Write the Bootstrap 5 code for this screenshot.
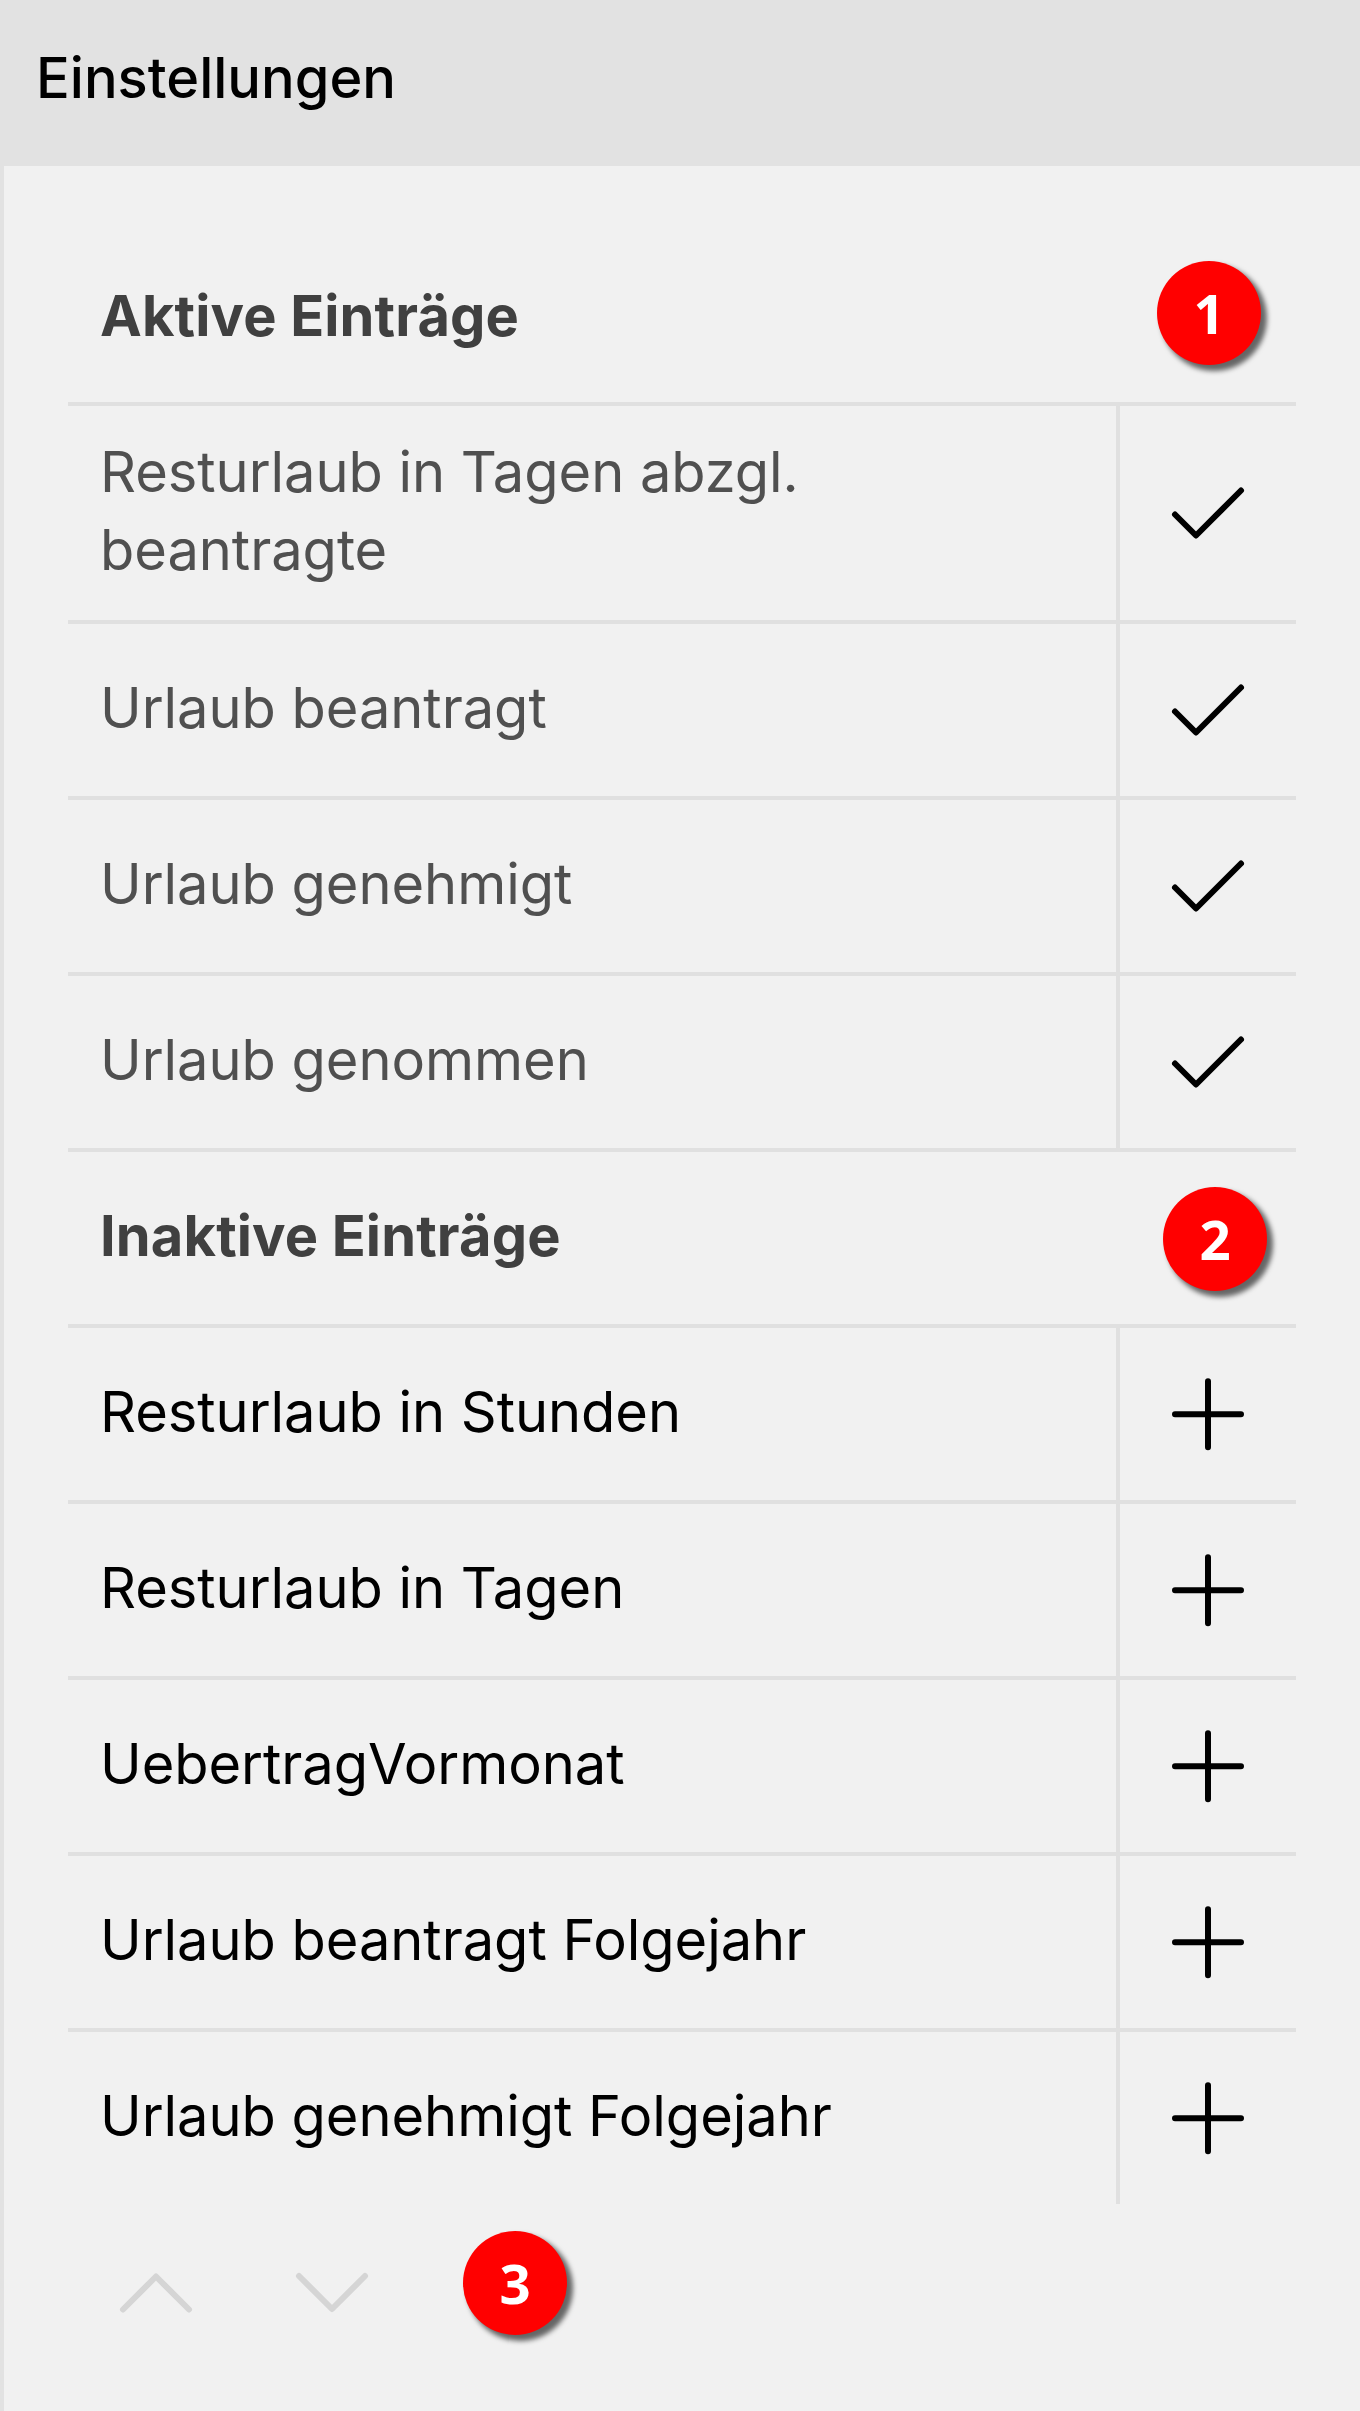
<!DOCTYPE html>
<html lang="de">
<head>
<meta charset="utf-8">
<meta name="viewport" content="width=device-width, initial-scale=1">
<title>Einstellungen</title>
<link rel="stylesheet" href="https://cdn.jsdelivr.net/npm/bootstrap@5.3.0/dist/css/bootstrap.min.css">
<style>
  :root { --line: #e0e0e0; --panel: #f1f1f1; --bar: #e2e2e2; }
  body { background: var(--panel); color: #000; font-family: Inter, "Liberation Sans", sans-serif; font-size: 56px; line-height: 78px; }
  .settings-panel { height: 2411px; border-left: 4px solid var(--bar); }
  .settings-bar { height: 166px; background: var(--bar); margin-left: -4px; padding: 0 36px 10px; }
  .settings-bar h1 { font-size: 56px; line-height: 78px; font-weight: 500; color: #000; }
  .settings-body { padding: 64px 64px 0; }
  .entry-head { height: 172px; padding: 0 32px; font-weight: 700; color: #404040; letter-spacing: .14px; }
  .entry-head h2 { font: inherit; }
  .entry-head.inactive { padding-bottom: 4px; }
  .entry-list { border-top: 4px solid var(--line); }
  .entry { height: 176px; border-bottom: 4px solid var(--line); }
  .entry.tall { height: 218px; }
  .entry-list.last .entry:last-child { height: 172px; border-bottom: 0; }
  .entry-name { padding: 0 200px 4px 32px; letter-spacing: -.04px; }
  .active-list .entry-name { color: #505050; }
  .entry-action { position: relative; width: 180px; border: 0; border-left: 4px solid var(--line); background: none; padding: 0; }
  /* joins the column rule across the horizontal row borders */
  .entry:not(:last-child) .entry-action { margin-bottom: -4px; padding-bottom: 4px; }
  .glyph { width: 80px; height: 80px; fill: none; stroke: #000; stroke-width: 6; stroke-linecap: round; stroke-linejoin: round; }
  .order-bar { height: 176px; }
  .order-btn { width: 176px; border: 0; background: none; padding: 0; }
  .order-btn .glyph { stroke: #d5d5d5; }
  .marker { width: 104px; height: 104px; background: red; color: #fff; font: 700 54.6px/104px "Open Sans", "Noto Sans", sans-serif; letter-spacing: 0; box-shadow: 5px 5px 5px 1px rgba(0,0,0,.58); }
  .marker-1 { top: 31px; right: 35px; }
  .marker-2 { top: 35px; right: 29px; }
  .marker-3 { margin: 27px 0 0 43px; }
</style>
</head>
<body>
<svg class="d-none">
  <symbol id="check" viewBox="0 0 80 80"><path d="M7 41.5 28 62.5 73 17.5"/></symbol>
  <symbol id="plus" viewBox="0 0 80 80"><path d="M7 40.3H73M40 7.3V73.3"/></symbol>
  <symbol id="up" viewBox="0 0 80 80"><path d="M7 57.5 40 24.5 73 57.5"/></symbol>
  <symbol id="down" viewBox="0 0 80 80"><path d="M7 24 40 57 73 24"/></symbol>
</svg>
<main class="settings-panel overflow-hidden">
  <header class="settings-bar d-flex align-items-center"><h1 class="m-0">Einstellungen</h1></header>
  <div class="settings-body">
    <div class="entry-head position-relative d-flex align-items-center">
      <h2 class="m-0">Aktive Einträge</h2>
      <span class="marker marker-1 position-absolute rounded-circle text-center">1</span>
    </div>
    <div class="entry-list active-list">
      <div class="entry tall d-flex"><div class="entry-name flex-grow-1 d-flex align-items-center">Resturlaub in Tagen abzgl. beantragte</div><button class="entry-action flex-shrink-0 d-flex align-items-center justify-content-center" type="button"><svg class="glyph"><use href="#check"/></svg></button></div>
      <div class="entry d-flex"><div class="entry-name flex-grow-1 d-flex align-items-center">Urlaub beantragt</div><button class="entry-action flex-shrink-0 d-flex align-items-center justify-content-center" type="button"><svg class="glyph"><use href="#check"/></svg></button></div>
      <div class="entry d-flex"><div class="entry-name flex-grow-1 d-flex align-items-center">Urlaub genehmigt</div><button class="entry-action flex-shrink-0 d-flex align-items-center justify-content-center" type="button"><svg class="glyph"><use href="#check"/></svg></button></div>
      <div class="entry d-flex"><div class="entry-name flex-grow-1 d-flex align-items-center">Urlaub genommen</div><button class="entry-action flex-shrink-0 d-flex align-items-center justify-content-center" type="button"><svg class="glyph"><use href="#check"/></svg></button></div>
    </div>
    <div class="entry-head inactive position-relative d-flex align-items-center">
      <h2 class="m-0">Inaktive Einträge</h2>
      <span class="marker marker-2 position-absolute rounded-circle text-center">2</span>
    </div>
    <div class="entry-list last">
      <div class="entry d-flex"><div class="entry-name flex-grow-1 d-flex align-items-center">Resturlaub in Stunden</div><button class="entry-action flex-shrink-0 d-flex align-items-center justify-content-center" type="button"><svg class="glyph"><use href="#plus"/></svg></button></div>
      <div class="entry d-flex"><div class="entry-name flex-grow-1 d-flex align-items-center">Resturlaub in Tagen</div><button class="entry-action flex-shrink-0 d-flex align-items-center justify-content-center" type="button"><svg class="glyph"><use href="#plus"/></svg></button></div>
      <div class="entry d-flex"><div class="entry-name flex-grow-1 d-flex align-items-center">UebertragVormonat</div><button class="entry-action flex-shrink-0 d-flex align-items-center justify-content-center" type="button"><svg class="glyph"><use href="#plus"/></svg></button></div>
      <div class="entry d-flex"><div class="entry-name flex-grow-1 d-flex align-items-center">Urlaub beantragt Folgejahr</div><button class="entry-action flex-shrink-0 d-flex align-items-center justify-content-center" type="button"><svg class="glyph"><use href="#plus"/></svg></button></div>
      <div class="entry d-flex"><div class="entry-name flex-grow-1 d-flex align-items-center">Urlaub genehmigt Folgejahr</div><button class="entry-action flex-shrink-0 d-flex align-items-center justify-content-center" type="button"><svg class="glyph"><use href="#plus"/></svg></button></div>
    </div>
    <div class="order-bar d-flex">
      <button class="order-btn d-flex align-items-center justify-content-center" type="button" aria-label="Nach oben"><svg class="glyph"><use href="#up"/></svg></button>
      <button class="order-btn d-flex align-items-center justify-content-center" type="button" aria-label="Nach unten"><svg class="glyph"><use href="#down"/></svg></button>
      <span class="marker marker-3 rounded-circle text-center">3</span>
    </div>
  </div>
</main>
<script src="https://cdn.jsdelivr.net/npm/bootstrap@5.3.0/dist/js/bootstrap.bundle.min.js"></script>
</body>
</html>
